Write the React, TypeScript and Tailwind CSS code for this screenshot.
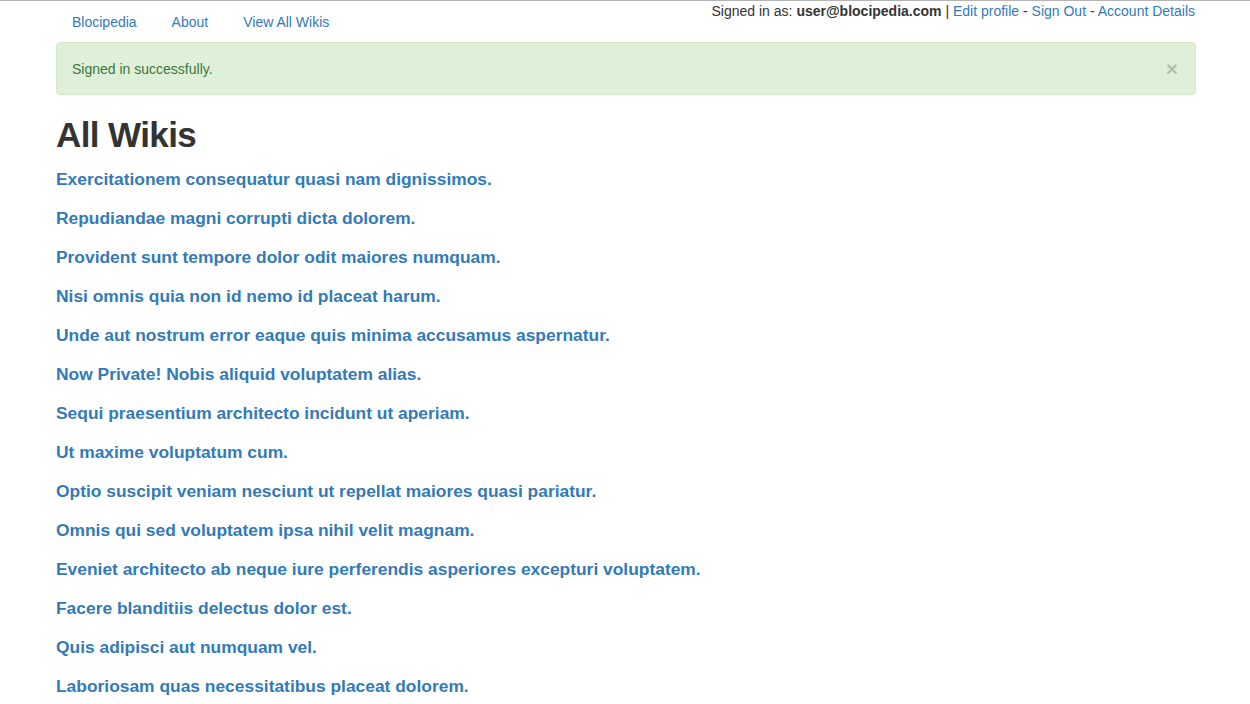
import React from 'react';

const wikis = [
  'Exercitationem consequatur quasi nam dignissimos.',
  'Repudiandae magni corrupti dicta dolorem.',
  'Provident sunt tempore dolor odit maiores numquam.',
  'Nisi omnis quia non id nemo id placeat harum.',
  'Unde aut nostrum error eaque quis minima accusamus aspernatur.',
  'Now Private! Nobis aliquid voluptatem alias.',
  'Sequi praesentium architecto incidunt ut aperiam.',
  'Ut maxime voluptatum cum.',
  'Optio suscipit veniam nesciunt ut repellat maiores quasi pariatur.',
  'Omnis qui sed voluptatem ipsa nihil velit magnam.',
  'Eveniet architecto ab neque iure perferendis asperiores excepturi voluptatem.',
  'Facere blanditiis delectus dolor est.',
  'Quis adipisci aut numquam vel.',
  'Laboriosam quas necessitatibus placeat dolorem.',
];

export default function App() {
  return (
    <div className="min-h-screen bg-white border-t border-[#b4b4b4] text-[14px] leading-[20px] text-[#333] font-['Liberation_Sans',Arial,sans-serif]">
      <div className="w-[1140px] ml-[56px]">
        {/* Top nav */}
        <div className="flex justify-between items-start h-[40px]">
          <ul className="flex gap-[5px] pl-[1px] pt-[1px]">
            {['Blocipedia', 'About', 'View All Wikis'].map((l) => (
              <li key={l}>
                <a href="#" className="block px-[15px] py-[10px] text-[#337ab7]">
                  {l}
                </a>
              </li>
            ))}
          </ul>
          <div className="pr-[1px]">
            Signed in as: <strong>user@blocipedia.com</strong> |{' '}
            <a href="#" className="text-[#337ab7]">Edit profile</a> -{' '}
            <a href="#" className="text-[#337ab7]">Sign Out</a> -{' '}
            <a href="#" className="text-[#337ab7]">Account Details</a>
          </div>
        </div>

        {/* Flash */}
        <div className="mt-[1px] flex items-center justify-between h-[53px] px-[15px] bg-[#dff0d8] border border-[#d6e9c6] rounded-[4px] text-[#3c763d]">
          <span>Signed in successfully.</span>
          <button className="text-[21px] font-bold leading-none text-black opacity-20 pr-[2px]">×</button>
        </div>

        <h1 className="mt-[20px] text-[35px] leading-[39.6px] font-bold tracking-[-0.6px] text-[#333]">All Wikis</h1>

        <div className="mt-[5px]">
          {wikis.map((w) => (
            <div key={w} className="h-[39px] flex items-center">
              <a href="#" className="text-[17.4px] font-bold text-[#337ab7]">
                {w}
              </a>
            </div>
          ))}
        </div>
      </div>
    </div>
  );
}
